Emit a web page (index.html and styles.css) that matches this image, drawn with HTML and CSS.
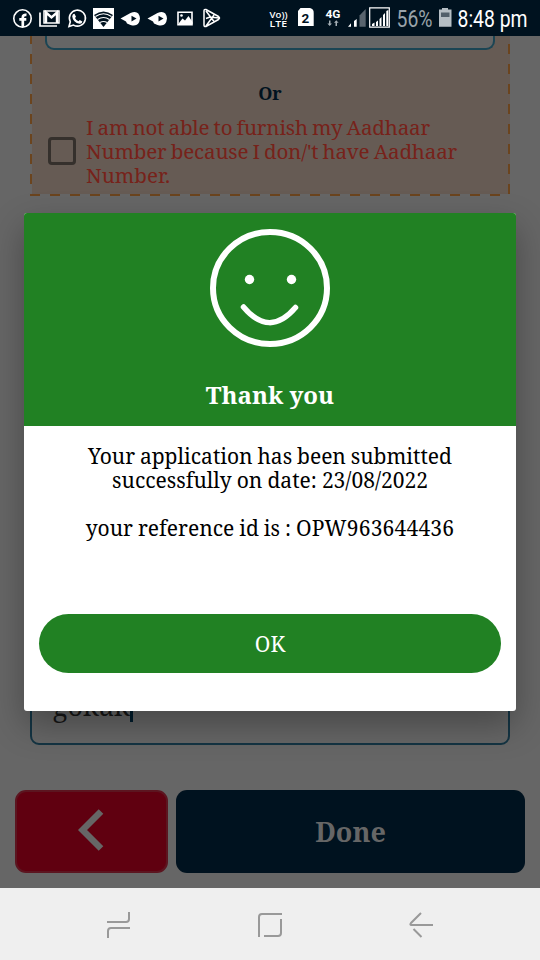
FILE: index.html
```html
<!DOCTYPE html>
<html lang="en">
<head>
<meta charset="utf-8">
<title>Application</title>
<link rel="stylesheet" href="styles.css">
</head>
<body>
<div class="phone">
  <header class="status">
    <svg width="540" height="36" viewBox="0 0 540 36" fill="none" stroke="#fff" stroke-width="1.6">
      <circle cx="22.500" cy="18.500" r="8.700"/>
      <path d="M22.800 27V17.500q0-3 3.700-2.600M19.300 19.300h7" stroke-width="2.700"/>
      <path d="M40 12.500V26h17" stroke-width="1.700"/>
      <path d="M44 11h15v12H44z" stroke-width="1.500"/>
      <path d="M46 23V12.500l5.500 5 5.500-5V23" stroke-width="2.400"/>
      <path d="M69 26.500l1.300-4.700a8 8 0 1 1 3.200 3.300z"/>
      <path d="M73 14.300l1.500-.6 1.500 3-1 1.300q1 2.300 3.500 3.200l1.300-1.200 2.600 1.400q-.4 2.400-2.700 2.300-6.800-1-7.500-7.500z" fill="#fff" stroke="none"/>
      <path d="M93 8h21v21H93z" fill="#fff" stroke="none"/>
      <path d="M94 15q9.500-7 19 0l-9.500 12z" fill="#00121f" stroke="none"/>
      <path d="M95.500 16.500q8-5.500 16 0M97.500 19.500q6-4 12 0M100 22.500q3.500-2 7 0" stroke-width="1.200"/>
      <g id="fish" stroke="none">
        <path d="M120.500 18.500l10-5.500q8.500-3.500 9.500 5.500-1 9-9.500 6.500l-3.500-1.500-1-2z" fill="#fff"/>
        <path d="M131.500 15.700l5 2.900-5 3z" fill="#00121f"/>
      </g>
      <use href="#fish" x="27"/>
      <path d="M178 12.300h14v12.500h-14z"/>
      <path d="M179 23l3.500-4.500 2.500 2 3.500-4.500 4 6v2h-13.500z" fill="#fff" stroke="none"/>
      <circle cx="181.500" cy="15.500" r="1.300" fill="#fff" stroke="none"/>
      <path d="M204 11q0-2 2-1.500l12.500 7q2 1.500 0 3l-12.500 7q-2 .5-2-1.500zM206 11l8 10.500M206 26l8-11M206 18.500l4-1.500 9 1" stroke-width="1.500"/>
      <g fill="#fff" stroke="none" class="status-font">
        <text x="269.500" y="17.500" font-size="9.500" font-weight="600" textLength="18" lengthAdjust="spacingAndGlyphs" class="volte">Vo))</text>
        <text x="269.500" y="27" font-size="9.500" font-weight="600" textLength="17.500" lengthAdjust="spacingAndGlyphs" class="volte">LTE</text>
        <path d="M300.500 8H310q4 1 3.700 5v13h-15.700V11z"/>
        <text x="301.500" y="22.800" font-size="13.500" font-weight="700" fill="#00121f">2</text>
        <text x="325.500" y="17.500" font-size="10.500" font-weight="700" textLength="15" lengthAdjust="spacingAndGlyphs">4G</text>
        <path d="M329 20.500h1.500v3h1.500L329.700 26l-2.300-2.500h1.600zM335.500 26v-3.300H334l2.300-2.500 2.300 2.500H337V26z" fill="#a5afb6"/>
        <path d="M348 26.700l3-3.500v3.500zM354 21l2.700-2v7.700H354z"/>
        <path d="M359.500 15.500l6.200-6.500v17.700h-6.200z" fill="#59646e"/>
        <path d="M372 26v-2l2.500-1.500V26zM376 22l2-1.500V26h-2zM379.500 19l2-2v9h-2zM383 15l2-2v13h-2zM386.300 11l2-1v16h-2z"/>
        <text x="396.500" y="27" font-size="23" fill="#99a3aa" textLength="36" lengthAdjust="spacingAndGlyphs">56%</text>
        <path d="M442 8h6v1.500h3.500v17.200H439V9.500h3z" fill="#b6bfc5"/>
        <path d="M441 12.500h8.500V17H441z" fill="#52606b"/>
        <text x="457.500" y="27" font-size="23" textLength="70" lengthAdjust="spacingAndGlyphs">8:48 pm</text>
      </g>
      <path d="M369.700 7.800h19.600v19.400h-19.600z" stroke-width="1.200"/>
    </svg>
  </header>

  <main class="screen">
    <section class="aadhaar">
      <div class="number-input"></div>
      <div class="or">Or</div>
      <div class="decline">
        <span class="checkbox"></span>
        <div>
          <p class="l1">I am not able to furnish my Aadhaar</p>
          <p class="l2">Number because I don/'t have Aadhaar</p>
          <p class="l3">Number.</p>
        </div>
      </div>
    </section>
    <div class="place-input"><span>gokak</span><i class="caret"></i></div>
    <div class="actions">
      <div class="back"><svg width="26" height="42" viewBox="0 0 26 42"><path d="M23 2.500L4.500 21 23 39.500" fill="none" stroke="#666" stroke-width="6.500"/></svg></div>
      <div class="done">Done</div>
    </div>
    <div class="dialog">
      <div class="dialog-head">
        <svg width="120" height="120" viewBox="0 0 120 120" fill="none" stroke="#fff">
          <ellipse cx="60" cy="60" rx="57" ry="56" stroke-width="6"/>
          <circle cx="39.500" cy="51.500" r="4.700" fill="#fff" stroke="none"/>
          <circle cx="81.500" cy="51.500" r="4.700" fill="#fff" stroke="none"/>
          <path d="M33.500 79q26 31 52 .5" stroke-width="5.500" stroke-linecap="round"/>
        </svg>
        <h1>Thank you</h1>
      </div>
      <div class="message">
        <p class="m1">Your application has been submitted</p>
        <p class="m2">successfully on date: 23/08/2022</p>
        <p class="m3">your reference id is : <span>OPW963644436</span></p>
      </div>
      <div class="ok">OK</div>
    </div>
  </main>

  <nav class="navbar">
    <svg width="540" height="72" viewBox="0 0 540 72" fill="none" stroke="#999" stroke-width="2">
      <path d="M107 34h19q3 0 3-3v-7M108 50v-7q0-3 3-3h19"/>
      <path d="M259 49V29q0-3 3-3h20M281 31v14q0 3-3 3h-14"/>
      <path d="M433 37h-21.500q-2 0-.5-2l10-10M413.500 41l8 8"/>
    </svg>
  </nav>
</div>
</body>
</html>
```
FILE: styles.css
```css
* { box-sizing: border-box; }
body {
  margin: 0;
  font-family: "Noto Serif", "Droid Serif", "DejaVu Serif Condensed", "DejaVu Serif", serif;
}
p, h1 { margin: 0; }
svg { display: block; }
.phone {
  width: 540px;
  height: 960px;
  display: grid;
  grid-template-rows: 36px 852px 72px;
  overflow: hidden;
}
.status { background: #00121f; position: relative; z-index: 2; }
.status-font { font-family: Roboto, sans-serif; }
.volte { font-family: "Open Sans", sans-serif; }
.screen {
  background: #666;
  position: relative;
  overflow: hidden;
  display: flex;
  flex-direction: column;
}
.aadhaar {
  width: 480px;
  height: 160px;
  flex: none;
  margin: 0 30px;
  background:
    repeating-linear-gradient(to right, #6b441e 0 10px, #666 10px 20px) 0 100% / 100% 2px no-repeat,
    repeating-linear-gradient(to bottom, #6b441e 0 8px, #666 8px 18px, #6b441e 18px 20px) 0 0 / 2px 100% no-repeat,
    repeating-linear-gradient(to bottom, #665b54 0 8px, #6b441e 8px 18px, #665b54 18px 20px) 100% 0 / 2px 100% no-repeat,
    #665b54;
}
.number-input {
  height: 14px;
  margin: 0 15px;
  border: 2px solid #1b4554;
  border-top: 0;
  border-radius: 0 0 9px 9px;
  background: #666;
}
.or {
  margin-top: 30px;
  height: 26px;
  line-height: 26px;
  font-size: 18px;
  font-weight: 700;
  text-align: center;
  color: #00121f;
}
.decline {
  display: flex;
  margin: 9px 0 0 18px;
  font-size: 20.6px;
  line-height: 24px;
  color: #77221a;
  white-space: nowrap;
}
.l1 { letter-spacing: -.18px; word-spacing: -1px; }
.l2 { letter-spacing: -.18px; word-spacing: -1px; }
.checkbox {
  width: 28px;
  height: 28px;
  margin: 22px 10px 0 0;
  border: 3px solid #35302c;
  border-radius: 4px;
}
.place-input {
  width: 480px;
  height: 69px;
  flex: none;
  margin: 480px 30px 0;
  border: 2px solid #143443;
  border-radius: 9px;
  display: flex;
  padding: 8px 0 0 21px;
  font-size: 27px;
  line-height: 40px;
  color: #161616;
}
.caret { width: 3px; height: 36px; background: #001c2c; }
.actions {
  display: grid;
  grid-template-columns: 153px 349px;
  gap: 8px;
  height: 83px;
  margin: 45px 15px 0;
}
.actions > div {
  border-radius: 11px;
  display: flex;
  align-items: center;
  justify-content: center;
}
.back { background: #600010; border: 2px solid #5c1520; padding: 0 2px 4px 0; }
.done { background: #00121f; color: #666; font-size: 27px; font-weight: 700; }
.dialog {
  position: absolute;
  left: 24px;
  top: 177px;
  width: 492px;
  height: 498px;
  border-radius: 3px;
  background: #fff;
  overflow: hidden;
  box-shadow: 0 14px 34px rgba(0, 0, 0, .3);
}
.dialog-head {
  height: 213px;
  padding-top: 15px;
  display: flex;
  flex-direction: column;
  align-items: center;
  background: #218123;
  color: #fff;
}
h1 { margin-top: 29px; font-size: 24px; line-height: 36px; }
.message {
  height: 188px;
  padding-top: 18px;
  font-size: 21px;
  line-height: 24px;
  text-align: center;
  color: #000;
  white-space: nowrap;
}
.m1 { word-spacing: -.6px; }
.m2 { word-spacing: -.4px; }
.m3 { margin-top: 24px; word-spacing: -.5px; }
.m3 span { letter-spacing: .2px; }
.ok {
  height: 59px;
  margin: 0 15px;
  border-radius: 30px;
  background: #218123;
  color: #fff;
  font-size: 21px;
  line-height: 61px;
  text-align: center;
}
.navbar { background: #efefef; }
```
